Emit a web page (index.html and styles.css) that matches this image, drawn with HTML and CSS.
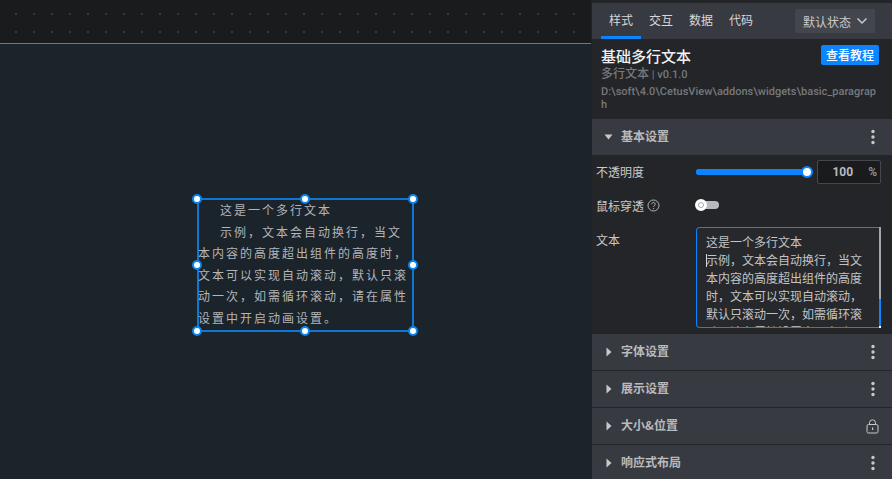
FILE: index.html
```html
<!DOCTYPE html>
<html lang="zh-CN">
<head>
<meta charset="utf-8">
<title>基础多行文本</title>
<link rel="stylesheet" href="styles.css">
</head>
<body>
<div class="app">
  <main class="stage">
    <div class="ruler"></div>
    <div class="canvas">
      <div class="widget">
        <p class="para">这是一个多行文本</p>
        <p class="para">示例，文本会自动换行，当文本内容的高度超出组件的高度时，文本可以实现自动滚动，默认只滚动一次，如需循环滚动，请在属性设置中开启动画设置。</p>
        <i class="handle h-tl"></i><i class="handle h-tc"></i><i class="handle h-tr"></i>
        <i class="handle h-ml"></i><i class="handle h-mr"></i>
        <i class="handle h-bl"></i><i class="handle h-bc"></i><i class="handle h-br"></i>
      </div>
    </div>
  </main>
  <aside class="panel">
    <nav class="tabs">
      <a class="tab active">样式</a>
      <a class="tab">交互</a>
      <a class="tab">数据</a>
      <a class="tab">代码</a>
      <div class="state">默认状态
        <svg class="chev" width="12" height="8" viewBox="0 0 12 8"><path d="M1.500 1.500 6 6l4.500-4.500" fill="none" stroke="#c8c9cc" stroke-width="1.500"/></svg>
      </div>
    </nav>
    <header class="info">
      <div class="title-row">
        <h1 class="title">基础多行文本</h1>
        <button class="tutorial">查看教程</button>
      </div>
      <div class="version">多行文本<span class="version-num"> | v0.1.0</span></div>
      <div class="path">D:\soft\4.0\CetusView\addons\widgets\basic_paragraph</div>
    </header>
    <section class="group-head open">
      <svg class="caret" width="10" height="10" viewBox="0 0 10 10"><path d="M0.500 2.500h8l-4 5z" fill="#c8c9cc"/></svg>
      <span class="group-name">基本设置</span>
      <svg class="dots" width="4" height="16" viewBox="0 0 4 16"><circle cx="2" cy="2.500" r="1.700"/><circle cx="2" cy="8" r="1.700"/><circle cx="2" cy="13.500" r="1.700"/></svg>
    </section>
    <div class="group-body">
      <div class="row">
        <label class="label">不透明度</label>
        <div class="slider"><div class="slider-fill"></div><i class="slider-knob"></i></div>
        <div class="num"><span class="num-val">100</span><span class="num-unit">%</span></div>
      </div>
      <div class="row row-toggle">
        <label class="label">鼠标穿透
          <svg class="help" width="13" height="13" viewBox="0 0 13 13"><circle cx="6.500" cy="6.500" r="5.500" fill="none" stroke="#b5b6b9"/><path d="M4.800 5.200a1.700 1.700 0 1 1 2.600 1.400c-.6.400-.9.700-.9 1.300" fill="none" stroke="#b5b6b9"/><circle cx="6.500" cy="9.600" r=".7" fill="#b5b6b9"/></svg>
        </label>
        <div class="toggle"><i class="toggle-knob"></i></div>
      </div>
      <div class="row row-text">
        <label class="label">文本</label>
        <div class="textarea-wrap">
          <div class="textarea">这是一个多行文本<br><i class="cursor"></i>示例，文本会自动换行，当文本内容的高度超出组件的高度时，文本可以实现自动滚动，默认只滚动一次，如需循环滚动，请在属性设置中开启动画设置。</div>
          <i class="scrollbar"></i>
        </div>
      </div>
    </div>
    <section class="group-head">
      <svg class="caret" width="10" height="10" viewBox="0 0 10 10"><path d="M2.500 0.500v9l5-4.500z" fill="#c8c9cc"/></svg>
      <span class="group-name">字体设置</span>
      <svg class="dots" width="4" height="16" viewBox="0 0 4 16"><circle cx="2" cy="2.500" r="1.700"/><circle cx="2" cy="8" r="1.700"/><circle cx="2" cy="13.500" r="1.700"/></svg>
    </section>
    <section class="group-head">
      <svg class="caret" width="10" height="10" viewBox="0 0 10 10"><path d="M2.500 0.500v9l5-4.500z" fill="#c8c9cc"/></svg>
      <span class="group-name">展示设置</span>
      <svg class="dots" width="4" height="16" viewBox="0 0 4 16"><circle cx="2" cy="2.500" r="1.700"/><circle cx="2" cy="8" r="1.700"/><circle cx="2" cy="13.500" r="1.700"/></svg>
    </section>
    <section class="group-head">
      <svg class="caret" width="10" height="10" viewBox="0 0 10 10"><path d="M2.500 0.500v9l5-4.500z" fill="#c8c9cc"/></svg>
      <span class="group-name">大小&amp;位置</span>
      <svg class="lock" width="13" height="15" viewBox="0 0 13 15"><rect x="1" y="5.500" width="11" height="8.500" rx="1.500" fill="none" stroke="#c8c9cc"/><path d="M3.500 5.500V3.800a3 3 0 0 1 6 0v1.700" fill="none" stroke="#c8c9cc"/><rect x="6" y="8.500" width="1.200" height="2.500" fill="#c8c9cc"/></svg>
    </section>
    <section class="group-head last">
      <svg class="caret" width="10" height="10" viewBox="0 0 10 10"><path d="M2.500 0.500v9l5-4.500z" fill="#c8c9cc"/></svg>
      <span class="group-name">响应式布局</span>
      <svg class="dots" width="4" height="16" viewBox="0 0 4 16"><circle cx="2" cy="2.500" r="1.700"/><circle cx="2" cy="8" r="1.700"/><circle cx="2" cy="13.500" r="1.700"/></svg>
    </section>
  </aside>
</div>
</body>
</html>
```

FILE: styles.css
```css
* { box-sizing: border-box; }
html, body { margin: 0; height: 100%; overflow: hidden; }
body {
  font-family: Roboto, "Noto Sans CJK SC", sans-serif;
  font-size: 12px;
  color: #c8c9cc;
  background: #1b232b;
}
.app { display: flex; height: 479px; width: 892px; }

.stage { width: 591px; flex: none; display: flex; flex-direction: column; }
.ruler {
  height: 44px;
  flex: none;
  background-color: #1a1b1d;
  background-image: conic-gradient(at 2px 2px, transparent 75%, #37393c 0);
  background-size: 18px 18px;
  background-repeat: repeat;
  background-position: 15px 13px;
  border-bottom: 1px solid #76787a;
}
.canvas { flex: 1; position: relative; background: #1b232b; }

.widget {
  position: absolute;
  left: 197px;
  top: 154px;
  width: 217px;
  height: 134px;
  border: 2px solid #0f76d4;
  color: #b4b5b7;
  font-family: "Noto Sans CJK SC", sans-serif;
  font-size: 12px;
  letter-spacing: 2px;
  line-height: 21.600px;
}
.para { margin: 0 0 0 -1px; text-indent: 22px; }
.para:first-child { margin-top: -1px; }
.handle {
  position: absolute;
  width: 10px;
  height: 10px;
  border-radius: 50%;
  background: #fff;
  border: 2px solid #0a84ee;
}
.h-tl { left: -7px; top: -6px; }
.h-tc { left: 101px; top: -6px; }
.h-tr { right: -6px; top: -6px; }
.h-ml { left: -7px; top: 60px; }
.h-mr { right: -6px; top: 60px; }
.h-bl { left: -7px; bottom: -6px; }
.h-bc { left: 101px; bottom: -6px; }
.h-br { right: -6px; bottom: -6px; }

.panel {
  width: 301px;
  flex: none;
  background: #232528;
  border-left: 1px solid #1b232b;
  padding-top: 3px;
  display: flex;
  flex-direction: column;
}
.tabs {
  height: 36px;
  flex: none;
  background: #383a41;
  display: flex;
  align-items: stretch;
  padding-left: 9px;
}
.tab {
  width: 40px;
  text-align: center;
  line-height: 33px;
  font-size: 12px;
  color: #d6d7d9;
  font-family: "Noto Sans CJK SC", sans-serif;
}
.tab.active { border-bottom: 3px solid #0a84ff; }
.state {
  margin: 6px 17px 0 auto;
  width: 80px;
  height: 24px;
  background: #44464d;
  border-radius: 2px;
  display: flex;
  align-items: center;
  justify-content: space-between;
  padding: 0 7px 0 8px;
  font-family: "Noto Sans CJK SC", sans-serif;
  color: #c8c9cc;
}
.info { height: 80px; flex: none; padding: 6px 13px 0 9px; background: #232528; }
.title-row { display: flex; justify-content: space-between; align-items: flex-start; }
.title {
  margin: 0;
  font-size: 15px;
  font-weight: 500;
  line-height: 22px;
  color: #f2f2f3;
  font-family: "Noto Sans CJK SC", sans-serif;
}
.tutorial {
  border: 0;
  background: #0a84ff;
  color: #fff;
  font: 500 12px/20px "Noto Sans CJK SC", sans-serif;
  width: 58px;
  height: 20px;
  padding: 0;
  border-radius: 2px;
}
.version { font-size: 12px; line-height: 17px; margin-top: -1px; color: #77797d; font-weight: 500; }
.version-num { font-size: 11px; text-rendering: geometricPrecision; }
.path {
  font-size: 11px;
  text-rendering: geometricPrecision;
  line-height: 13px;
  margin-top: 2px;
  color: #77797d;
  font-weight: 500;
  word-break: break-all;
}
.group-head {
  height: 36px;
  flex: none;
  background: #383a41;
  display: flex;
  align-items: center;
  padding: 0 17px 0 12px;
  margin-bottom: 1px;
}
.group-head.open { margin-bottom: 0; }
.group-head.last { margin-bottom: 0; }
.caret { flex: none; }
.group-name {
  margin: -2px 0 0 7px;
  flex: 1;
  font: 700 12px/16px "Noto Sans CJK SC", sans-serif;
  color: #b9babd;
}
.dots { fill: #c8c9cc; flex: none; }
.lock { flex: none; margin-right: -4px; }

.group-body { height: 179px; flex: none; padding: 0 10px 0 4px; background: #232528; }
.row { display: flex; align-items: center; height: 33px; }
.label {
  width: 100px;
  flex: none;
  color: #c8c9cc;
  font-family: "Noto Sans CJK SC", sans-serif;
  display: flex;
  align-items: center;
  gap: 3px;
}
.slider { position: relative; width: 111px; height: 6px; border-radius: 3px; background: #0a84ff; }
.slider-fill { height: 100%; background: #0a84ff; border-radius: 3px; }
.slider-knob {
  position: absolute;
  right: -6px;
  top: -3px;
  width: 12px;
  height: 12px;
  border-radius: 50%;
  background: #fff;
  border: 2px solid #0a84ff;
}
.num {
  margin-left: 10px;
  width: 64px;
  height: 24px;
  background: #1a1b1d;
  border: 1px solid #45474c;
  border-radius: 2px;
  display: flex;
  align-items: center;
  justify-content: flex-end;
  font-weight: 700;
  color: #b9babd;
  font-size: 12px;
  padding-right: 3px;
}
.num-val { margin-right: 15px; }
.num-unit { font-size: 12px; color: #8f9094; }
.row-toggle { height: 34px; }
.toggle { position: relative; width: 23px; height: 8px; border-radius: 4px; background: #b8b9be; }
.toggle-knob {
  position: absolute;
  left: -1px;
  top: -2px;
  width: 12px;
  height: 12px;
  border-radius: 50%;
  background: #fff;
  border: 3px solid #fff;
  box-shadow: inset 0 0 0 1px #a8a9ac;
}
.row-text { align-items: flex-start; height: 102px; margin-top: 5px; }
.row-text .label { line-height: 16px; margin-top: 5px; }
.textarea-wrap { position: relative; width: 185px; height: 101px; }
.textarea-wrap::after {
  content: "";
  position: absolute;
  right: 0;
  bottom: 0;
  width: 2px;
  height: 2px;
  background: #fff;
}
.textarea {
  height: 100%;
  border: 1px solid #0a84ff;
  border-right-width: 2px;
  border-radius: 4px 0 0 4px;
  padding: 5px 8px 0 9px;
  overflow: hidden;
  line-height: 18px;
  font-family: "Noto Sans CJK SC", sans-serif;
  color: #c3c4c6;
  background: #26282c;
}
.cursor {
  display: inline-block;
  width: 1px;
  height: 13px;
  margin-right: -1px;
  background: #d8d9db;
  vertical-align: -2px;
}
.scrollbar {
  position: absolute;
  right: 0;
  top: 0;
  width: 2px;
  height: 72px;
  background: #a5a6a9;
}
```
